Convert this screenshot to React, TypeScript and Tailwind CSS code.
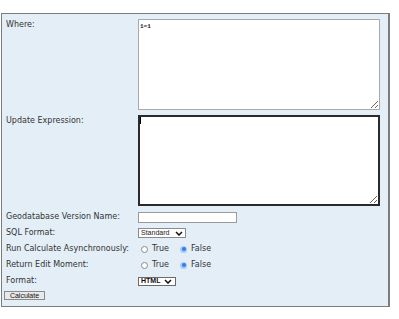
import React from 'react';

const labelCls = "w-[132px] shrink-0 text-[8px] leading-[10px] text-[#333]";

function Chevron() {
  return (
    <svg width="8" height="5" viewBox="0 0 8 5" className="ml-auto block">
      <polyline points="1,1 4,4 7,1" fill="none" stroke="#111" strokeWidth="1.5" />
    </svg>
  );
}

function Radio({ checked }: { checked?: boolean }) {
  if (checked) {
    return (
      <span className="block w-[7px] h-[7px] rounded-full bg-[#a6cbf4] flex items-center justify-center">
        <span className="block w-[4px] h-[4px] rounded-full bg-[#2c7ee8]" />
      </span>
    );
  }
  return <span className="block w-[7px] h-[7px] rounded-full border border-[#8a8a8a] bg-white" />;
}

function RadioPair() {
  return (
    <div className="flex items-center text-[8px] leading-[10px] text-[#333]">
      <span className="ml-[3px]"><Radio /></span>
      <span className="ml-[4px]">True</span>
      <span className="ml-[11px]"><Radio checked /></span>
      <span className="ml-[4px]">False</span>
    </div>
  );
}

export default function App() {
  return (
    <div className="w-[399px] h-[319px] bg-white pt-[13px] pl-[1px]" style={{ fontFamily: '"DejaVu Sans", Verdana, sans-serif' }}>
      <div className="w-[389px] h-[294px] bg-[#e4eef7] border border-r-2 border-[#7c7c7c] pl-[4px] pt-[5px]">
        <div className="flex">
          <div className={labelCls + " mt-[1px]"}>Where:</div>
          <textarea
            defaultValue="1=1"
            className="block w-[242px] h-[91px] bg-white border border-[#a9a9a9] px-[1px] py-[3px] text-[6px] leading-[8px] text-[#222] outline-none"
            style={{ fontFamily: '"Liberation Mono", monospace', fontWeight: 700 }}
          />
        </div>
        <div className="flex mt-[5px]">
          <div className={labelCls + " mt-[1px]"}>Update Expression:</div>
          <div className="relative">
            <textarea className="block w-[242px] h-[91px] bg-white border-2 border-[#2a2a2a] outline-none" />
            <span className="absolute left-[2px] top-[2px] w-[1px] h-[7px] bg-black" />
          </div>
        </div>
        <div className="flex items-center h-[16px] mt-[3px]">
          <div className={labelCls}>Geodatabase Version Name:</div>
          <div className="w-[99px] h-[11px] bg-white border border-[#9a9a9a]" />
        </div>
        <div className="flex items-center h-[16px]">
          <div className={labelCls}>SQL Format:</div>
          <div className="w-[48px] h-[10px] bg-white border border-[#8a8a8a] flex items-center pl-[2px] pr-[2px] text-[7px] leading-[8px] text-[#222]" style={{ fontFamily: '"Liberation Sans", Arial, sans-serif' }}>
            <span>Standard</span>
            <Chevron />
          </div>
        </div>
        <div className="flex items-center h-[16px]">
          <div className={labelCls}>Run Calculate Asynchronously:</div>
          <RadioPair />
        </div>
        <div className="flex items-center h-[16px]">
          <div className={labelCls}>Return Edit Moment:</div>
          <RadioPair />
        </div>
        <div className="flex items-center h-[16px]">
          <div className={labelCls}>Format:</div>
          <div className="w-[38px] h-[9px] bg-white border border-[#6a6a6a] flex items-center pl-[2px] pr-[3px] text-[7px] leading-[8px] text-[#111] font-bold" style={{ fontFamily: '"Liberation Sans", Arial, sans-serif' }}>
            <span>HTML</span>
            <Chevron />
          </div>
        </div>
        <div className="flex mt-[2px] ml-[-2px]">
          <div className="flex items-center justify-center w-[41px] h-[9px] bg-[#e9e9e9] border border-[#8a8a8a] text-[7px] leading-[8px] text-[#111]" style={{ fontFamily: '"Liberation Sans", Arial, sans-serif' }}>
            Calculate
          </div>
        </div>
      </div>
    </div>
  );
}
